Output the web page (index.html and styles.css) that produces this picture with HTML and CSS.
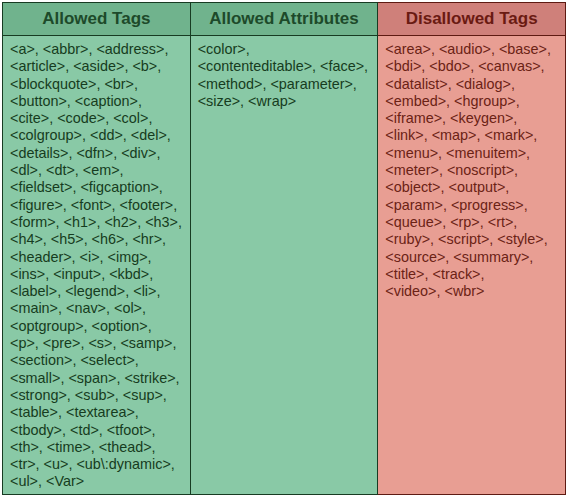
FILE: index.html
```html
<!DOCTYPE html>
<html>
<head>
<meta charset="utf-8">
<link rel="stylesheet" href="styles.css">
</head>
<body>
<table class="tags">
  <thead>
    <tr>
      <th class="green-head">Allowed Tags</th>
      <th class="green-head">Allowed Attributes</th>
      <th class="red-head">Disallowed Tags</th>
    </tr>
  </thead>
  <tbody>
    <tr>
      <td class="green-cell">&lt;a&gt;, &lt;abbr&gt;, &lt;address&gt;, &lt;article&gt;, &lt;aside&gt;, &lt;b&gt;, &lt;blockquote&gt;, &lt;br&gt;, &lt;button&gt;, &lt;caption&gt;, &lt;cite&gt;, &lt;code&gt;, &lt;col&gt;, &lt;colgroup&gt;, &lt;dd&gt;, &lt;del&gt;, &lt;details&gt;, &lt;dfn&gt;, &lt;div&gt;, &lt;dl&gt;, &lt;dt&gt;, &lt;em&gt;, &lt;fieldset&gt;, &lt;figcaption&gt;, &lt;figure&gt;, &lt;font&gt;, &lt;footer&gt;, &lt;form&gt;, &lt;h1&gt;, &lt;h2&gt;, &lt;h3&gt;, &lt;h4&gt;, &lt;h5&gt;, &lt;h6&gt;, &lt;hr&gt;, &lt;header&gt;, &lt;i&gt;, &lt;img&gt;, &lt;ins&gt;, &lt;input&gt;, &lt;kbd&gt;, &lt;label&gt;, &lt;legend&gt;, &lt;li&gt;, &lt;main&gt;, &lt;nav&gt;, &lt;ol&gt;, &lt;optgroup&gt;, &lt;option&gt;, &lt;p&gt;, &lt;pre&gt;, &lt;s&gt;, &lt;samp&gt;, &lt;section&gt;, &lt;select&gt;, &lt;small&gt;, &lt;span&gt;, &lt;strike&gt;, &lt;strong&gt;, &lt;sub&gt;, &lt;sup&gt;, &lt;table&gt;, &lt;textarea&gt;, &lt;tbody&gt;, &lt;td&gt;, &lt;tfoot&gt;, &lt;th&gt;, &lt;time&gt;, &lt;thead&gt;, &lt;tr&gt;, &lt;u&gt;, &lt;ub\:dynamic&gt;, &lt;ul&gt;, &lt;Var&gt;</td>
      <td class="green-cell">&lt;color&gt;, &lt;contenteditable&gt;, &lt;face&gt;, &lt;method&gt;, &lt;parameter&gt;, &lt;size&gt;, &lt;wrap&gt;</td>
      <td class="red-cell">&lt;area&gt;, &lt;audio&gt;, &lt;base&gt;, &lt;bdi&gt;, &lt;bdo&gt;, &lt;canvas&gt;, &lt;datalist&gt;, &lt;dialog&gt;, &lt;embed&gt;, &lt;hgroup&gt;, &lt;iframe&gt;, &lt;keygen&gt;, &lt;link&gt;, &lt;map&gt;, &lt;mark&gt;, &lt;menu&gt;, &lt;menuitem&gt;, &lt;meter&gt;, &lt;noscript&gt;, &lt;object&gt;, &lt;output&gt;, &lt;param&gt;, &lt;progress&gt;, &lt;queue&gt;, &lt;rp&gt;, &lt;rt&gt;, &lt;ruby&gt;, &lt;script&gt;, &lt;style&gt;, &lt;source&gt;, &lt;summary&gt;, &lt;title&gt;, &lt;track&gt;,<br>&lt;video&gt;, &lt;wbr&gt;</td>
    </tr>
  </tbody>
</table>
</body>
</html>
```

FILE: styles.css
```css
html, body {
  margin: 0;
  padding: 0;
  background: #ffffff;
}

body {
  padding: 2px 0 0 2px;
  font-family: "Liberation Sans", Arial, Helvetica, sans-serif;
}

.tags {
  border-collapse: collapse;
  width: 564px;
  table-layout: fixed;
}

.tags th,
.tags td {
  width: 33.33%;
  border: 1px solid #173b22;
}

.tags th {
  height: 32px;
  padding: 0 6px;
  font-size: 17px;
  font-weight: bold;
  text-align: center;
  vertical-align: middle;
}

.tags td {
  padding: 5px 6px 3px 7px;
  font-size: 14.4px;
  line-height: 17.3px;
  vertical-align: top;
  text-align: left;
}

.green-head {
  background: #70b38d;
  color: #1d4a2a;
}

.green-cell {
  background: #89c9a6;
  color: #163c20;
}

.tags .red-head {
  background: #cf807a;
  color: #6a1a12;
  border-color: #5e1a12;
}

.tags .red-cell {
  background: #e89e93;
  color: #6b2215;
  border-color: #5e1a12;
}
```
